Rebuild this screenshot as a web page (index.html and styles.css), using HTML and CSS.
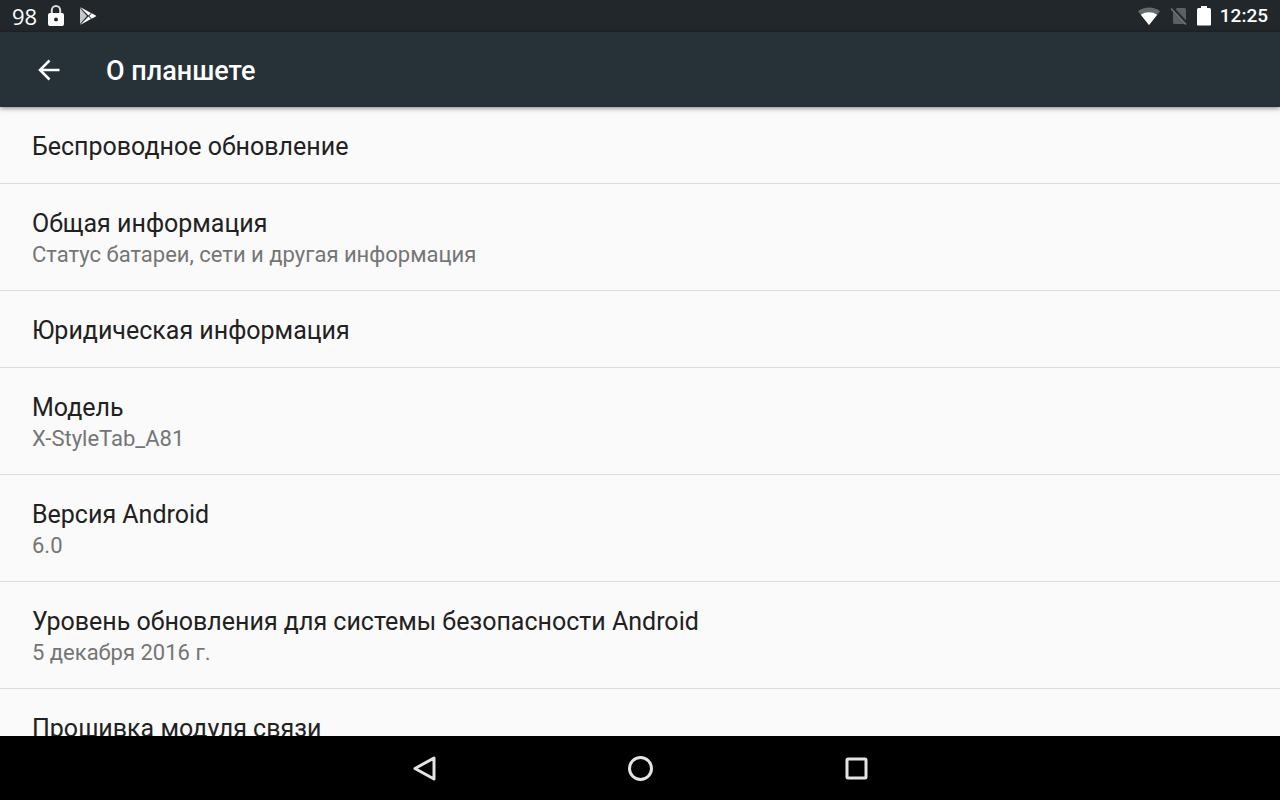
FILE: index.html
```html
<!DOCTYPE html>
<html lang="ru">
<head>
  <meta charset="UTF-8">
  <meta name="viewport" content="width=device-width, initial-scale=1">
  <title>О планшете</title>
  <link rel="stylesheet" href="styles.css">
</head>
<body>
  <div class="status-bar">
    <div class="status-left">
      <span class="battery-level">98</span>
      <svg class="icon-lock" width="16" height="22" viewBox="0 0 16 22">
        <path d="M3.800 9V5.200a4.200 4.200 0 0 1 8.400 0V9" fill="none" stroke="#ddd" stroke-width="2"/>
        <path fill="#fff" fill-rule="evenodd" d="M2 8h12a2 2 0 0 1 2 2v9a2 2 0 0 1-2 2H2a2 2 0 0 1-2-2v-9a2 2 0 0 1 2-2zm6 4.500a2 2 0 1 0 0 4 2 2 0 0 0 0-4z"/>
      </svg>
      <svg class="icon-play" width="18" height="20" viewBox="0 0 18 20">
        <path fill="#c4c7c9" d="M1 2v16l7-8z"/>
        <path fill="#fff" d="M1 1l11 6-2.500 2.500zM1 19l11-6-2.500-2.500zM12.800 7.300L17.500 10l-4.700 2.700L10.200 10z"/>
      </svg>
    </div>
    <div class="status-right">
      <svg class="icon-wifi" width="24" height="20" viewBox="0 0 24 20">
        <path fill="#656a6d" d="M12 19L1 5.200C4 2.700 8 1.500 12 1.500s8 1.200 11 3.700z"/>
        <path fill="#fff" d="M12 19L3.800 8.700C6.200 7 9 6.200 12 6.200s5.800.8 8.200 2.500z"/>
      </svg>
      <svg class="icon-sim" width="18" height="20" viewBox="0 0 18 20">
        <path fill="#5c6063" d="M7 2h7.500a1.500 1.500 0 0 1 1.500 1.500v13a1.500 1.500 0 0 1-1.500 1.500h-10A1.500 1.500 0 0 1 3 16.500V6z"/>
        <path d="M2 2l15 16" stroke="#23282c" stroke-width="3.500"/>
        <path d="M1 2.500l15 16" stroke="#73777a" stroke-width="1.500"/>
      </svg>
      <svg class="icon-battery" width="14" height="20" viewBox="0 0 14 20">
        <path fill="#fff" d="M4 0h6v2h2.500A1.500 1.500 0 0 1 14 3.500v15a1 1 0 0 1-1 1H1a1 1 0 0 1-1-1v-15A1.500 1.500 0 0 1 1.500 2H4z"/>
      </svg>
      <span class="clock">12:25</span>
    </div>
  </div>

  <header class="app-bar">
    <button class="back-btn" aria-label="Назад">
      <svg width="22" height="22" viewBox="0 0 22 22" fill="none" stroke="#fff" stroke-width="2.500">
        <path d="M11.500 1.500L2 11l9.500 9.500M2 11h19.500"/>
      </svg>
    </button>
    <h1>О планшете</h1>
  </header>

  <main class="settings">
    <ul class="list">
      <li class="item">
        <a href="#" class="title">Беспроводное обновление</a>
      </li>
      <li class="item">
        <a href="#" class="title">Общая информация</a>
        <p class="summary">Статус батареи, сети и другая информация</p>
      </li>
      <li class="item">
        <a href="#" class="title">Юридическая информация</a>
      </li>
      <li class="item">
        <span class="title">Модель</span>
        <p class="summary">X-StyleTab_A81</p>
      </li>
      <li class="item">
        <span class="title">Версия Android</span>
        <p class="summary">6.0</p>
      </li>
      <li class="item">
        <span class="title">Уровень обновления для системы безопасности Android</span>
        <p class="summary">5 декабря 2016 г.</p>
      </li>
      <li class="item">
        <span class="title">Прошивка модуля связи</span>
      </li>
    </ul>
  </main>

  <nav class="nav-bar">
    <button class="nav-btn" aria-label="Назад">
      <svg width="28" height="28" viewBox="0 0 28 28">
        <path d="M5 14.500L24 4v21z"/>
      </svg>
    </button>
    <button class="nav-btn" aria-label="Домой">
      <svg width="28" height="28" viewBox="0 0 28 28">
        <circle cx="14.500" cy="14.500" r="11"/>
      </svg>
    </button>
    <button class="nav-btn" aria-label="Обзор">
      <svg width="28" height="28" viewBox="0 0 28 28">
        <rect x="5" y="5" width="19" height="19" rx="1"/>
      </svg>
    </button>
  </nav>
</body>
</html>
```
FILE: styles.css
```css
* {
  box-sizing: border-box;
}
body {
  display: flex;
  flex-direction: column;
  height: 100vh;
  margin: 0;
  overflow: hidden;
  font-family: Roboto, "Noto Sans", sans-serif;
  background: #fafafa;
  color: #212121;
}
svg {
  display: block;
}
button {
  padding: 0;
  border: none;
  background: none;
  cursor: pointer;
}

/* status bar */
.status-bar {
  display: flex;
  flex: none;
  align-items: center;
  justify-content: space-between;
  height: 32px;
  padding: 0 12px;
  background: #22272b;
  color: #fff;
}
.status-left,
.status-right {
  display: flex;
  align-items: center;
}
.status-left {
  gap: 11px;
}
.status-right {
  gap: 9px;
}
.battery-level {
  font-family: "Open Sans", sans-serif;
  font-size: 22px;
  line-height: 32px;
}
.icon-play {
  margin-left: 4px;
}
.clock {
  font-size: 19px;
  font-weight: 500;
  line-height: 32px;
}

/* app bar */
.app-bar {
  display: flex;
  flex: none;
  align-items: center;
  gap: 32px;
  height: 75px;
  padding: 0 24px;
  background: #263238;
  color: #fff;
  box-shadow: 0 1px 5px rgba(0,0,0,0.5);
  z-index: 1;
}
.back-btn {
  display: flex;
  align-items: center;
  justify-content: center;
  width: 50px;
  height: 50px;
}
.app-bar h1 {
  margin: 0;
  padding-top: 2px;
  font-size: 27px;
  font-weight: 500;
  line-height: 32px;
}

/* settings list */
.settings {
  flex: 1;
  min-height: 0;
  overflow: hidden;
}
.list {
  margin: 0;
  padding: 0;
  list-style: none;
}
.item {
  padding: 24px 32px 20px;
  border-bottom: 1px solid #dcdcdc;
}
.title {
  display: block;
  color: #212121;
  font-size: 25px;
  line-height: 32px;
  text-decoration: none;
}
.summary {
  margin: 0;
  color: #757575;
  font-size: 22px;
  line-height: 30px;
}

/* navigation bar */
.nav-bar {
  display: flex;
  flex: none;
  align-items: center;
  justify-content: center;
  gap: 152px;
  height: 64px;
  background: #000;
}
.nav-btn {
  display: flex;
  align-items: center;
  justify-content: center;
  width: 64px;
  height: 64px;
}
.nav-btn svg {
  fill: none;
  stroke: #e4e4e4;
  stroke-width: 3;
  stroke-linejoin: round;
}
```
